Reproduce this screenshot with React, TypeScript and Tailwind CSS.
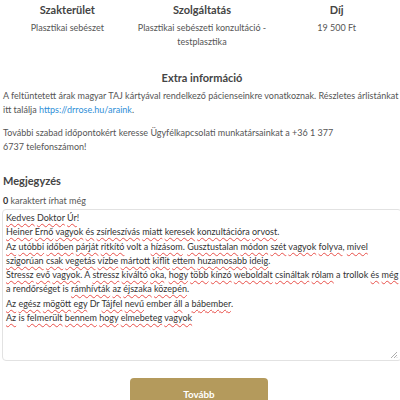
import React from 'react'

type Word = { t: string; bad?: boolean }

// "*" prefix marks a word the spell checker flags
const noteLines: string[] = [
  '*Kedves *Doktor *Úr!',
  '*Heiner *Ernő *vagyok *és *zsírleszívás *miatt *keresek *konzultációra *orvost.',
  '*Az *utóbbi *időben *párját *ritkító volt a *hízásom. *Gusztustalan *módon *szét *vagyok *folyva, *mivel',
  '*szigorúan *csak *vegetás *vízbe *mártott *kiflit *ettem *huzamosabb *ideig.',
  '*Stressz *evő *vagyok. A *stressz *kiváltó *oka, *hogy *több *kínzó *weboldalt *csináltak *rólam a trollok *és *még',
  'a rendőrséget is *rámhívták *az *éjszaka *közepén.',
  '*Az *egész *mögött *egy Dr *Tájfel *nevű ember *áll a *bábember.',
  '*Az is *felmerült *bennem *hogy *elmebeteg *vagyok',
]

const parseLine = (line: string): Word[] =>
  line.split(' ').map((w) => (w.startsWith('*') ? { t: w.slice(1), bad: true } : { t: w }))

const NoteLine: React.FC<{ line: string }> = ({ line }) => {
  const words = parseLine(line)
  return (
    <div className="whitespace-nowrap h-[14.3px] leading-[14.3px]">
      {words.map((w, i) => {
        const punct = w.t.match(/[.,!]$/)
        const core = punct ? w.t.slice(0, -1) : w.t
        return (
          <React.Fragment key={i}>
            {w.bad ? (
              <span className="underline decoration-wavy decoration-[#e8504a] decoration-[0.6px] underline-offset-[2px]">
                {core}
              </span>
            ) : (
              core
            )}
            {punct ? punct[0] : ''}
            {i < words.length - 1 ? ' ' : ''}
          </React.Fragment>
        )
      })}
    </div>
  )
}

export default function App() {
  return (
    <div
      className="w-[400px] h-[400px] overflow-hidden bg-white text-[#555] text-[9px]"
      style={{ fontFamily: 'Lato, "Open Sans", sans-serif' }}
    >
      <div className="w-[404px]">
        {/* service summary */}
        <div className="grid grid-cols-3 pt-[3px] text-center whitespace-nowrap">
          <div>
            <div className="font-bold text-[11px] text-[#444] leading-[14px]">Szakterület</div>
            <div className="mt-[4px] leading-[14px]">Plasztikai sebészet</div>
          </div>
          <div>
            <div className="font-bold text-[11px] text-[#444] leading-[14px]">Szolgáltatás</div>
            <div className="mt-[4px] leading-[14px]">
              Plasztikai sebészeti konzultáció -<br />
              testplasztika
            </div>
          </div>
          <div>
            <div className="font-bold text-[11px] text-[#444] leading-[14px]">Díj</div>
            <div className="mt-[4px] leading-[14px]">19 500 Ft</div>
          </div>
        </div>

        <div className="mt-[22px] text-center font-bold text-[11px] text-[#444] leading-[14px]">
          Extra információ
        </div>

        <div className="px-[3px] mt-[4px] leading-[14px]">
          <p className="whitespace-nowrap">
            A feltüntetett árak magyar TAJ kártyával rendelkező pácienseinkre vonatkoznak. Részletes árlistánkat
            <br />
            itt találja <span className="text-[#2f8fd8]">https://drrose.hu/araink</span>.
          </p>
          <p className="mt-[9px]">
            További szabad időpontokért keresse Ügyfélkapcsolati munkatársainkat a +36 1 377
            <br />
            6737 telefonszámon!
          </p>
        </div>

        <div className="px-[3px] mt-[20px] font-bold text-[11px] text-[#444] leading-[14px]">Megjegyzés</div>
        <div className="px-[3px] mt-[6px] leading-[14px]">
          <span className="font-bold text-[#333]">0</span> karaktert írhat még
        </div>

        <div className="relative ml-[2px] mt-[1px] w-[400px] h-[152px] border border-[#e2e2e2] rounded-[4px] px-[3px] pt-[1px] text-[#333] overflow-hidden">
          {noteLines.map((l, i) => (
            <NoteLine key={i} line={l} />
          ))}
          <svg className="absolute right-[3px] bottom-[1px]" width="8" height="8" viewBox="0 0 8 8">
            <path d="M7 1L1 7M7 4L4 7M7 6.5L6.5 7" stroke="#999" strokeWidth="0.8" />
          </svg>
        </div>

        <div className="flex justify-center mt-[17px] pr-[6px]">
          <button className="w-[138px] h-[32px] rounded-[4px] bg-[#b49a5c] text-white font-bold text-[9.8px]">
            Tovább
          </button>
        </div>
      </div>
    </div>
  )
}
